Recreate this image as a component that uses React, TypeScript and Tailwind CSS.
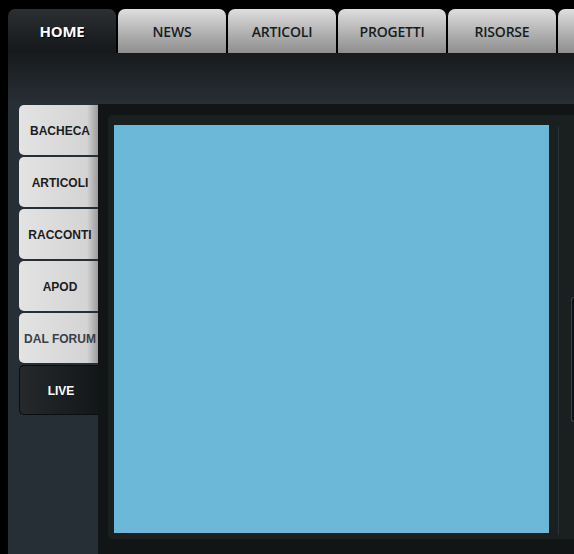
import React from 'react';

const tabs = ['HOME', 'NEWS', 'ARTICOLI', 'PROGETTI', 'RISORSE', ''];
const sideItems = ['BACHECA', 'ARTICOLI', 'RACCONTI', 'APOD', 'DAL FORUM'];

const App: React.FC = () => {
  return (
    <div className="w-[574px] h-[554px] overflow-hidden bg-black pl-2 pt-[9px] flex flex-col">
      {/* top tabs */}
      <div className="flex gap-[2px] h-[44px] shrink-0">
        {tabs.map((t, i) => (
          <div
            key={i}
            className={
              i === 0
                ? 'w-[108px] shrink-0 rounded-t-[7px] bg-gradient-to-b from-[#2c3033] to-[#15181a] flex items-center justify-center text-white font-bold text-[15px] tracking-[-0.3px] [text-shadow:1px_1px_0_#000]'
                : 'w-[108px] shrink-0 rounded-t-[7px] bg-gradient-to-b from-[#e0dedf] to-[#8d8e8d] flex items-center justify-center text-[#161d22] font-semibold text-[14px] tracking-[-0.2px]'
            }
            style={{ fontFamily: '"Open Sans", "DejaVu Sans", sans-serif' }}
          >
            {t}
          </div>
        ))}
      </div>

      {/* header bar */}
      <div className="h-[51px] shrink-0 bg-gradient-to-b from-[#181b1d] to-[#282f35]" />

      {/* body */}
      <div className="flex flex-1 min-h-0">
        <div className="w-[90px] shrink-0 bg-[#262f36] pl-[11px] pt-[1px] flex flex-col gap-[2px]">
          {sideItems.map((s) => (
            <div
              key={s}
              className={`h-[50px] rounded-l-[5px] bg-[linear-gradient(to_right,#e4e3e4_0%,#d5d4d5_86%,#9c9c9c_100%)] flex items-center justify-center pl-[3px] pt-[2px] font-bold text-[12px] ${
                s === 'DAL FORUM' ? 'text-[#3a4045]' : 'text-[#1c1c1c]'
              }`}
              style={{ fontFamily: '"Liberation Sans", Arial, sans-serif' }}
            >
              {s}
            </div>
          ))}
          <div
            className="h-[50px] rounded-l-[5px] border border-r-0 border-[#0b0d0e] bg-gradient-to-r from-[#25292c] to-[#13171a] flex items-center justify-center pl-[4px] pt-[2px] font-bold text-[12px] text-white"
            style={{ fontFamily: '"Liberation Sans", Arial, sans-serif' }}
          >
            LIVE
          </div>
        </div>

        <div className="flex-1 bg-[#121516] pl-[10px] pt-[11px] flex">
          <div className="flex-1 h-[424px] rounded-l-[5px] bg-[#1a1f20] pl-[6px] pt-[10px] flex">
            <div className="w-[435px] h-[408px] bg-[#6cb8d9] shrink-0" />
            <div className="w-[9px] shrink-0" />
            <div className="w-px h-[408px] mt-[2px] bg-[#2c3238] shrink-0" />
            <div className="flex-1 pl-[12px] pt-[172px]">
              <div className="h-[125px] rounded-l-[6px] border border-r-0 border-[#3a4046] bg-[#0d1018]" />
            </div>
          </div>
        </div>
      </div>
    </div>
  );
};

export default App;
